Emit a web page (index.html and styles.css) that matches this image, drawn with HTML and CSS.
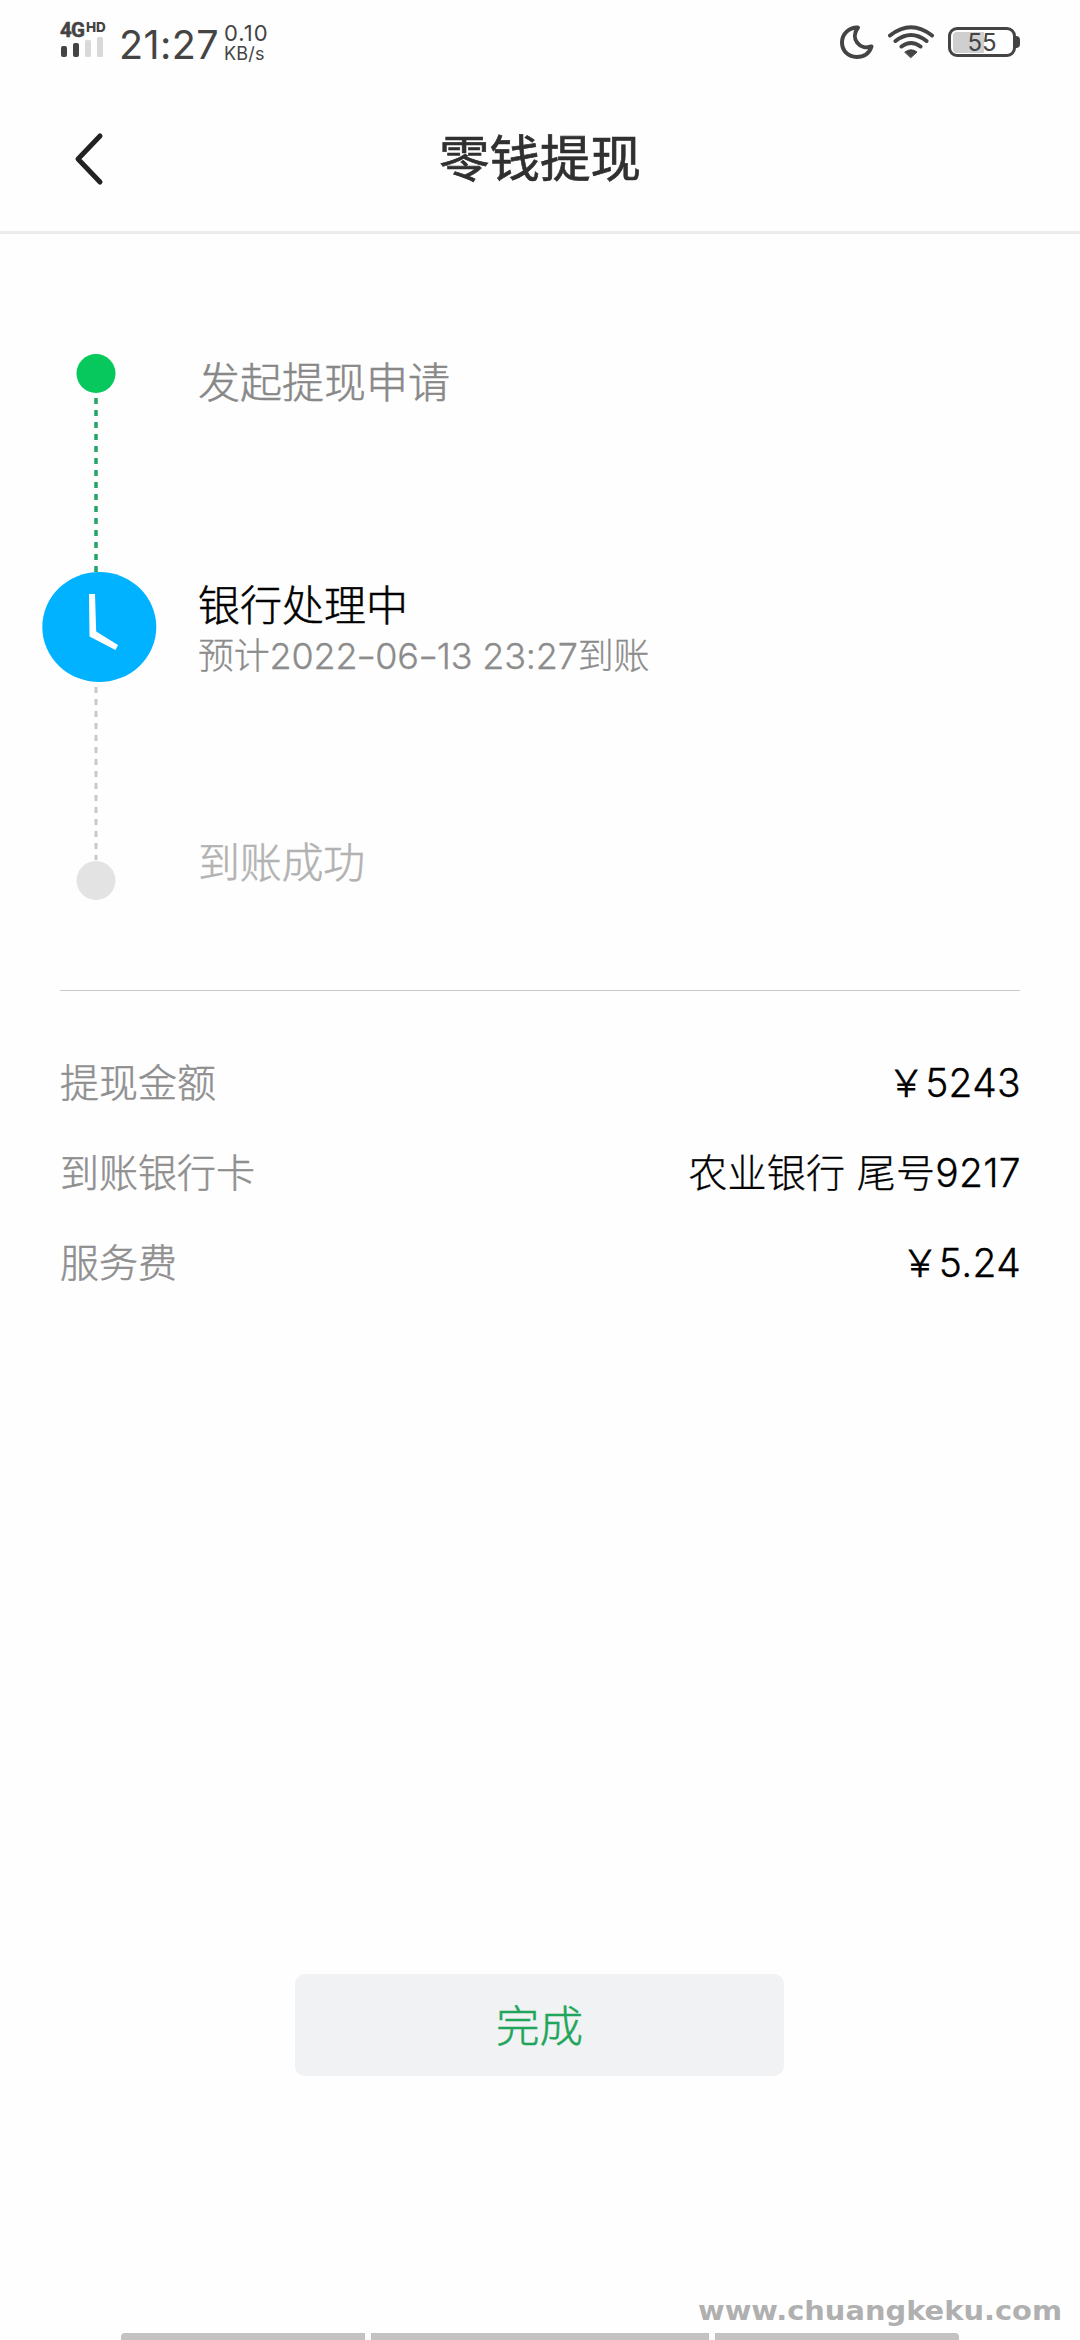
FILE: index.html
```html
<!DOCTYPE html>
<html lang="zh-CN">
<head>
<meta charset="utf-8">
<title>零钱提现</title>
<link rel="stylesheet" href="styles.css">
</head>
<body>
<div class="screen">
  <header class="status">
    <div class="network">
      <div class="network-type"><span class="gen">4G</span><span class="hd">HD</span></div>
      <svg class="bars" width="44" height="22" viewBox="0 0 44 22">
        <rect x="1" y="10" width="6" height="11" rx="2" fill="#444"/>
        <rect x="13" y="7" width="6" height="14" rx="2" fill="#444"/>
        <rect x="25" y="4" width="6" height="17" rx="1.5" fill="#d9d9d9"/>
        <rect x="37" y="1" width="6" height="20" rx="1.5" fill="#d9d9d9"/>
      </svg>
    </div>
    <div class="time">21:27</div>
    <div class="speed"><span class="rate">0.10</span><span class="unit">KB/s</span></div>
    <div class="indicators">
      <svg width="34" height="34" viewBox="0 0 34 34" fill="none" stroke="#444" stroke-width="4" stroke-linejoin="round">
        <path d="M18 2.500 C9 2 2 9 2 17.500 C2 26 8.500 32 16.500 32 C24 32 29.500 28 31.500 21.500 C20 25.500 9.500 14 18 2.500Z"/>
      </svg>
      <svg width="46" height="34" viewBox="0 0 46 34" fill="none" stroke="#444" stroke-width="4" stroke-linecap="round">
        <path d="M2 10.500 Q23 -6 44 10.500M7.500 16 Q23 4 38.500 16M13.500 21.500 Q23 14.500 32.500 21.500"/>
        <path d="M17 27 Q23 22.500 29 27 L23 32.500Z" fill="#444" stroke-width="1" stroke-linejoin="round"/>
      </svg>
      <div class="battery"><div class="level"></div><span>55</span></div>
      <div class="nub"></div>
    </div>
  </header>

  <nav class="titlebar">
    <svg class="back" width="32" height="54" viewBox="0 0 32 54" fill="none" stroke="#222" stroke-width="5" stroke-linecap="round" stroke-linejoin="round">
      <path d="M27 4 L5 27 L27 50"/>
    </svg>
    <h1>零钱提现</h1>
  </nav>

  <main>
    <section class="progress">
      <svg class="track" width="116" height="550" viewBox="0 0 116 550">
        <path d="M55 36 V220" stroke="#23a567" stroke-width="3.500" stroke-dasharray="6 6" stroke-dashoffset="2"/>
        <path d="M55 335 V508" stroke="#c8c8c8" stroke-width="3" stroke-dasharray="6 6"/>
        <circle cx="55" cy="21.500" r="19.500" fill="#06c85c"/>
        <ellipse cx="58.300" cy="275" rx="57" ry="55" fill="#00b2ff"/>
        <path d="M48 242 H54 L55.200 279.500 L77 293 L74.500 298 L48.500 284.500Z" fill="#fff"/>
        <circle cx="55" cy="528.500" r="19.500" fill="#e3e3e3"/>
      </svg>
      <ol class="steps">
        <li class="step done">发起提现申请</li>
        <li class="step active">银行处理中<p>预计2022<span class="dash">-</span>06<span class="dash">-</span>13 23:27到账</p></li>
        <li class="step pending">到账成功</li>
      </ol>
    </section>
    <dl class="details">
      <div><dt>提现金额</dt><dd><span class="yen">￥</span>5243</dd></div>
      <div><dt>到账银行卡</dt><dd>农业银行 尾号9217</dd></div>
      <div><dt>服务费</dt><dd><span class="yen">￥</span>5.24</dd></div>
    </dl>
  </main>

  <button class="finish" type="button">完成</button>

  <footer>
    <div class="site"><svg width="366" height="40" viewBox="0 0 366 40"><text x="0" y="26" textLength="364" lengthAdjust="spacingAndGlyphs">www.chuangkeku.com</text></svg></div>
    <div class="gesture"><i></i><i></i><i></i></div>
  </footer>
</div>
</body>
</html>
```

FILE: styles.css
```css
* { box-sizing: border-box; }
body {
  margin: 0;
  background: #fefefe;
  font-family: Inter, "Noto Sans CJK SC", sans-serif;
  font-weight: 300;
}
svg { display: block; flex: none; }
.screen {
  width: 1080px;
  height: 2340px;
  display: flex;
  flex-direction: column;
  overflow: hidden;
}
.status {
  height: 84px;
  flex: none;
  display: flex;
  align-items: flex-start;
  padding: 0 60px;
  color: #444;
}
.network { width: 59px; padding-top: 20px; }
.network-type { display: flex; height: 16px; font-weight: 800; }
.gen { font: 700 20.500px/20px Roboto, sans-serif; letter-spacing: -0.8px; width: 26px; -webkit-text-stroke: 0.5px; }
.hd { font-size: 13.500px; line-height: 14px; }
.time { width: 105px; font-size: 39.500px; line-height: 48px; padding-top: 21px; font-weight: 400; letter-spacing: 0.4px; }
.speed { display: flex; flex-direction: column; font-weight: 400; padding-top: 23px; }
.rate { font-size: 22px; line-height: 21px; letter-spacing: 1px; }
.unit { font-size: 18px; line-height: 19px; letter-spacing: 0.2px; }
.indicators { margin-left: auto; display: flex; align-items: flex-start; padding-top: 25px; }
.indicators svg:nth-child(2) { margin: 0 14px; }
.battery {
  width: 68px;
  height: 30px;
  margin-top: 2px;
  border: 3px solid #444;
  border-radius: 9px;
  display: grid;
  padding: 2px;
}
.battery > * { grid-area: 1 / 1; }
.level { width: 31px; background: #cfcfcf; border-radius: 4px 0 0 4px; }
.battery span { font-size: 24px; line-height: 21px; font-weight: 400; text-align: center; }
.nub { width: 4px; height: 12px; margin-top: 11px; background: #444; border-radius: 0 4px 4px 0; }

.titlebar {
  height: 150px;
  flex: none;
  display: grid;
  grid-template-columns: 1fr auto 1fr;
  align-items: start;
  border-bottom: 3px solid #ebebeb;
}
.back { margin: 48px 0 0 73px; }
h1 {
  margin: 38px 0 0;
  font-size: 50.500px;
  line-height: 74px;
  font-weight: 400;
  color: #303030;
  -webkit-text-stroke: 0.7px;
}

.progress {
  display: flex;
  margin: 118px 60px 0 41px;
  height: 638px;
}
.steps {
  list-style: none;
  margin: 1px 0 0 41px;
  padding: 0;
  font-size: 42px;
  line-height: 60px;
  white-space: nowrap;
  -webkit-text-stroke: 0.5px;
}
.done { height: 223px; color: #888; }
.active { height: 257px; color: #000; }
.pending { color: #b2b2b2; letter-spacing: -0.3px; }
.step p {
  margin: -4px 0 0;
  font-size: 36px;
  line-height: 48px;
  color: #8c8c8c;
  letter-spacing: -0.2px;
  -webkit-text-stroke: 0.3px;
}
.dash { display: inline-block; width: 18px; text-align: center; transform: scaleX(1.25); }
.details {
  margin: 0 60px;
  border-top: 1px solid #c8c8c8;
  padding-top: 47px;
  font-size: 39px;
}
.details div { display: flex; justify-content: space-between; height: 90px; line-height: 90px; }
dt { color: #8f8f8f; -webkit-text-stroke: 0.5px; }
dd { margin: 0 -1px 0 0; color: #000; letter-spacing: 0.3px; -webkit-text-stroke: 0.3px; }
.yen { font-family: "Noto Sans CJK SC", sans-serif; font-size: 37px; line-height: 1; -webkit-text-stroke: 0.8px; }

.finish {
  width: 489px;
  height: 102px;
  margin: 666px 0 0 295px;
  border: 0;
  border-radius: 10px;
  padding: 0 0 3px;
  background: #f0f2f4;
  color: #1fa65b;
  font: 300 43.500px/99px "Noto Sans CJK SC", sans-serif;
  -webkit-text-stroke: 0.5px;
}

footer { margin-top: auto; }
.site { display: flex; justify-content: flex-end; padding-right: 16px; height: 39px; }
.site text { font: bold 27px "DejaVu Sans", sans-serif; fill: #b0b0b0; }
.gesture { display: flex; gap: 6px; width: 838px; margin-left: 121px; height: 7px; border-radius: 4px 4px 0 0; overflow: hidden; }
.gesture i { flex: 244 0 0; background: #c2c2c2; }
.gesture i:nth-child(2) { flex-grow: 338; }
```
